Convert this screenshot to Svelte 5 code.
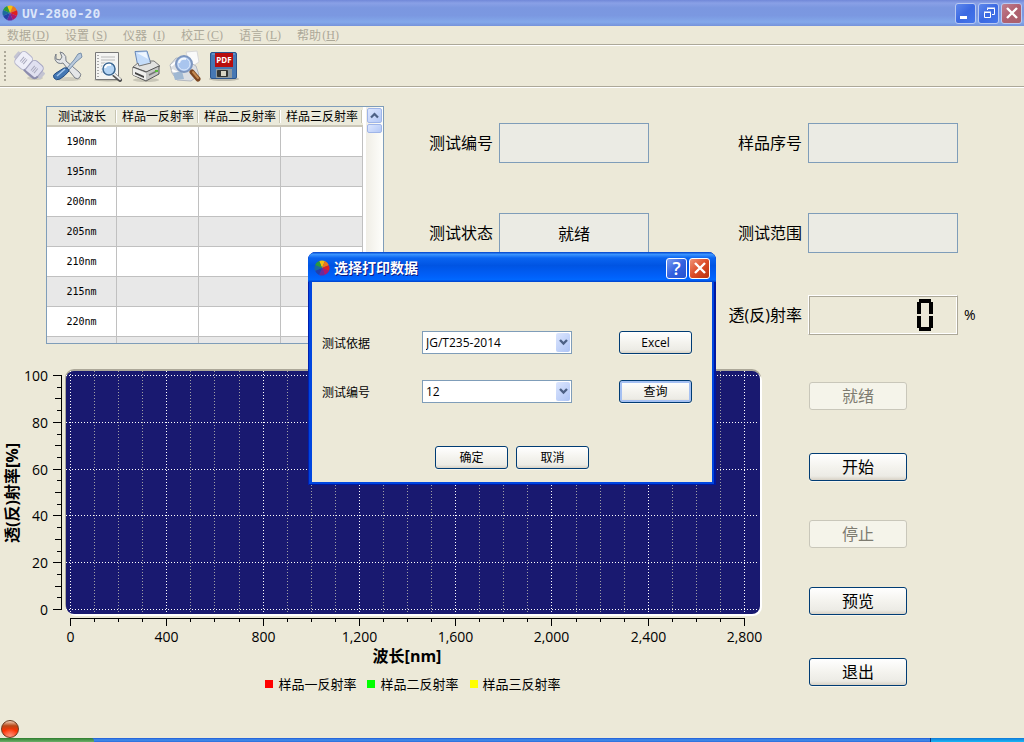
<script lang="ts">
	const menus = [
		{ label: '数据', key: 'D' },
		{ label: '设置', key: 'S' },
		{ label: '仪器', key: 'I' },
		{ label: '校正', key: 'C' },
		{ label: '语言', key: 'L' },
		{ label: '帮助', key: 'H' },
	];
	const samples = [
		{ name: '样品一反射率', color: '#ff0000' },
		{ name: '样品二反射率', color: '#00ff00' },
		{ name: '样品三反射率', color: '#ffff00' },
	];
	const rows = ['190nm', '195nm', '200nm', '205nm', '210nm', '215nm', '220nm', ''];
	const wheel = ['#f4c20d', '#f07818', '#e02020', '#b0186c', '#6a2a9c', '#2440a8', '#1c6a9c', '#2c9a38'];

	// segments of one LCD digit, lit for each number
	const segments = {
		a: [2, 2, 14, 2],
		b: [14, 3, 14, 15],
		c: [14, 17, 14, 29],
		d: [2, 30, 14, 30],
		e: [2, 17, 2, 29],
		f: [2, 3, 2, 15],
		g: [3, 16, 13, 16],
	};
	const lit = ['abcdef', 'bc', 'abged', 'abgcd', 'fgbc', 'afgcd', 'afgedc', 'abc', 'abcdefg', 'abcdfg'];

	let reading = $state(0);
	let standard = $state('JG/T235-2014');
	let testNo = $state('12');
	let chartWidth = $state(762);

	const left = 70;
	const top = 15;
	const bottom = 249;
	const right = $derived(chartWidth - 18);

	const xTicks = $derived(
		Array.from({ length: 29 }, (_, i) => ({
			value: i * 100,
			major: i % 4 === 0,
			x: Math.round(left + ((right - left) * i) / 28) + 0.5,
		}))
	);
	const yTicks = Array.from({ length: 21 }, (_, i) => ({
		value: i * 5,
		major: i % 4 === 0,
		size: i % 4 === 0 ? 9 : i % 2 === 0 ? 7 : 5,
		y: Math.round(bottom - ((bottom - top) * i) / 20) + 0.5,
	}));

	function wedge(i: number) {
		const a = ((i * 45 - 112) * Math.PI) / 180;
		const b = a + Math.PI / 4;
		return `M8 8L${8 + 7.5 * Math.cos(a)} ${8 + 7.5 * Math.sin(a)}A7.5 7.5 0 0 1 ${8 + 7.5 * Math.cos(b)} ${8 + 7.5 * Math.sin(b)}Z`;
	}
</script>

{#snippet logo()}
	<svg class="logo" width="16" height="16" viewBox="0 0 16 16" aria-hidden="true">
		{#each wheel as color, i}
			<path d={wedge(i)} fill={color} />
		{/each}
	</svg>
{/snippet}

{#snippet closeIcon()}
	<svg width="18" height="18" viewBox="0 0 18 18">
		<path d="M4 4l10 10M14 4L4 14" stroke="#fff" stroke-width="2.4" />
	</svg>
{/snippet}

{#snippet combo(id: string)}
	<span class="combo">
		{#if id === 'standard'}
			<select {id} bind:value={standard}><option>JG/T235-2014</option></select>
		{:else}
			<select {id} bind:value={testNo}><option>12</option></select>
		{/if}
		<span class="combo-arrow">
			<svg width="9" height="7" viewBox="0 0 9 7">
				<path d="M1 1l3.5 3.5L8 1" fill="none" stroke="#4d6185" stroke-width="2.4" />
			</svg>
		</span>
	</span>
{/snippet}

<div class="window">
	<header class="titlebar">
		{@render logo()}
		<h1>UV-2800-20</h1>
		<div class="window-buttons">
			<button class="cap" aria-label="最小化">
				<svg width="18" height="18" viewBox="0 0 18 18"><rect x="3" y="12" width="7" height="3" fill="#fff" /></svg>
			</button>
			<button class="cap" aria-label="还原">
				<svg width="18" height="18" viewBox="0 0 18 18" fill="none" stroke="#fff">
					<path d="M7.5 6V4.500H14.500V10.500H12M7 4h8" />
					<path d="M4.500 8.500h6v5h-6zM4 8h7" />
				</svg>
			</button>
			<button class="cap cap-close cap-dim" aria-label="关闭">{@render closeIcon()}</button>
		</div>
	</header>

	<nav class="menubar">
		{#each menus as menu}
			<button>{menu.label}<span class="key">(<u>{menu.key}</u>)</span></button>
		{/each}
	</nav>

	<div class="toolbar">
		<span class="grip"></span>
		<button aria-label="连接">
			<svg width="32" height="32" viewBox="0 0 32 32">
				<ellipse cx="22" cy="28" rx="8" ry="2" fill="#000" opacity=".12" />
				<g transform="translate(16 15) rotate(40)">
					<rect x="-17" y="-4" width="6" height="8" rx="1" fill="#c4c4d2" />
					<rect x="12" y="-4" width="6" height="8" rx="1" fill="#c4c4d2" />
					<rect x="-14" y="-8" width="14" height="16" rx="4" fill="#eeeef8" stroke="#b4b4ca" />
					<rect x="0" y="-8" width="14" height="16" rx="4" fill="#e0e0f0" stroke="#a4a4c0" />
					<path d="M-1 7h13q2-1 2-4" fill="none" stroke="#8c8cac" stroke-width="2" />
					<path d="M-9-3v6M-7-3v6M-5-3v6M5-3v6M7-3v6M9-3v6" stroke="#a8a8bc" />
				</g>
			</svg>
		</button>
		<button aria-label="设置">
			<svg width="32" height="32" viewBox="0 0 32 32">
				<ellipse cx="16" cy="29" rx="13" ry="2" fill="#000" opacity=".12" />
				<path d="M4 4q-3 6 2 9 3 1 5 0l12 15q3 2 5-1t-1-5L14 11q1-5-3-8L8 2l2 5-2 3-4-1z" fill="#e4e6e8" stroke="#777d85" />
				<path d="M29 3l-3 1-4 6-7 8 2 2 7-8 6-5z" fill="#b8c9dc" stroke="#7890ab" />
				<path d="M12 18q4-1 5 3-4 5-9 8-4 2-6-1t2-5z" fill="#4478b4" stroke="#244c80" />
				<path d="M5 26l8-7" stroke="#a4c8ee" stroke-width="1.500" />
			</svg>
		</button>
		<button aria-label="查询">
			<svg width="32" height="32" viewBox="0 0 32 32">
				<ellipse cx="17" cy="30" rx="14" ry="1.500" fill="#000" opacity=".2" />
				<path d="M4.500 2.500h23v27h-23z" fill="#f4f4f2" stroke="#777" />
				<path d="M7 5v23" stroke="#aaa" stroke-width="2" stroke-dasharray="1 2" />
				<path d="M10 7h14M10 10h14M10 13h12M10 16h5M10 19h4M10 22h4" stroke="#b8b8b8" />
				<path d="M22 24l7 6" stroke="#555" stroke-width="4" stroke-linecap="round" />
				<path d="M23 24l6 5" stroke="#eee" stroke-width="2" stroke-linecap="round" />
				<circle cx="18" cy="19" r="7" fill="#b4d4f4" stroke="#fff" />
				<circle cx="18" cy="19" r="6" fill="#b4d4f4" stroke="#3d6790" stroke-width="1.500" />
				<path d="M14 18q1-4 6-3" stroke="#fff" stroke-width="2" fill="none" />
			</svg>
		</button>
		<button aria-label="打印">
			<svg width="32" height="32" viewBox="0 0 32 32">
				<ellipse cx="16" cy="30" rx="13" ry="2" fill="#000" opacity=".15" />
				<path d="M5 1.500L17 1l4 13-13 3z" fill="#c4dcfa" stroke="#6687b8" />
				<path d="M7 3l9-1 2 7z" fill="#eef6ff" />
				<path d="M3 17l5-4 1 3 12-3-1-2h4l6 5-13 6z" fill="#e2e2e0" stroke="#777" />
				<path d="M3 17l13 5 13-6v8l-13 7-13-6z" fill="#c5c6c5" stroke="#555" />
				<path d="M3 18l13 5v7L3 25z" fill="#efefed" />
				<path d="M5 22l9 4v2l-9-4z" fill="#444" />
				<path d="M19 25l8-4" stroke="#777" stroke-width="1.500" />
				<rect x="25" y="20" width="3" height="2" fill="#58bd38" />
			</svg>
		</button>
		<button aria-label="预览">
			<svg width="32" height="32" viewBox="0 0 32 32">
				<path d="M17 2l11-1 2 11-9 6z" fill="#fafafa" stroke="#d8d8d8" />
				<path d="M1 15l6-7 8 1 12 7 3 9-8 6-14-1-5-7z" fill="#dcdfe3" stroke="#b3b8c0" />
				<path d="M2 16l6-5M3 20l6 3" stroke="#fff" stroke-width="2" />
				<path d="M4 23l9-2 2 8-9 1z" fill="#a0b8d2" />
				<path d="M23 22l6 7" stroke="#7b4520" stroke-width="5" stroke-linecap="round" />
				<path d="M24 22l5 6" stroke="#c58a52" stroke-width="2" stroke-linecap="round" />
				<circle cx="15" cy="14" r="8" fill="#a9c5ee" stroke="#7e97c0" stroke-width="2" />
				<circle cx="15" cy="14" r="6" fill="none" stroke="#dae8fb" />
				<path d="M10 13q1-5 7-4" stroke="#fff" stroke-width="2" fill="none" opacity=".8" />
			</svg>
		</button>
		<button aria-label="导出 PDF">
			<svg width="32" height="32" viewBox="0 0 32 32">
				<ellipse cx="16" cy="29" rx="15" ry="2" fill="#000" opacity=".2" />
				<rect x="2.500" y="2.500" width="26" height="26" rx="1.500" fill="#4678b4" stroke="#2b558c" />
				<path d="M4 4h23" stroke="#7ca8da" />
				<rect x="7" y="3" width="18" height="14" fill="#b80d0d" />
				<text x="16" y="13" text-anchor="middle" font-size="8" font-weight="700" fill="#fff">PDF</text>
				<rect x="8" y="19" width="16" height="9" fill="#8f9aa0" />
				<rect x="9" y="20" width="11" height="7" rx="1" fill="#343633" />
				<rect x="13" y="21" width="5" height="5" fill="#d8d5c4" />
			</svg>
		</button>
	</div>

	<main>
		<section class="overview">
			<div class="grid-view">
				<table>
					<thead>
						<tr>
							<th class="wave">测试波长</th>
							{#each samples as sample}
								<th>{sample.name}</th>
							{/each}
						</tr>
					</thead>
					<tbody>
						{#each rows as row}
							<tr>
								<td>{row}</td>
								<td></td>
								<td></td>
								<td></td>
							</tr>
						{/each}
					</tbody>
				</table>
				<div class="scrollbar">
					<button aria-label="向上滚动">
						<svg width="9" height="7" viewBox="0 0 9 7">
							<path d="M1 5.500L4.500 2 8 5.500" fill="none" stroke="#4d6185" stroke-width="2.200" />
						</svg>
					</button>
					<span class="thumb"></span>
				</div>
			</div>

			<div class="fields">
				<label class="first" for="test-id">测试编号</label>
				<input id="test-id" readonly />
				<label class="second" for="sample-id">样品序号</label>
				<input id="sample-id" readonly />

				<label class="first" for="status">测试状态</label>
				<input id="status" readonly value="就绪" />
				<label class="second" for="range">测试范围</label>
				<input id="range" readonly />

				<label class="second" for="reading">透(反)射率</label>
				<output id="reading" class="lcd" aria-label={String(reading)}>
					<svg width="16" height="32" viewBox="0 0 16 32" aria-hidden="true">
						{#each lit[reading] as name}
							{@const [x1, y1, x2, y2] = segments[name]}
							<line {x1} {y1} {x2} {y2} stroke="#000" stroke-width="4" />
						{/each}
					</svg>
				</output>
				<span class="unit">%</span>
			</div>
		</section>

		<section class="work">
			<div class="chart" bind:clientWidth={chartWidth}>
				<svg width={chartWidth} height="306">
					<rect x="65" y="9" width={chartWidth - 66} height="244" rx="9" fill="#aca899" />
					<rect x="67" y="12" width={chartWidth - 67} height="244" rx="9" fill="#fff" />
					<rect x="66" y="11" width={chartWidth - 68} height="243" rx="8" fill="#191970" />

					{#each xTicks as tick}
						<line
							x1={tick.x}
							y1="11"
							x2={tick.x}
							y2="253"
							stroke={tick.major ? '#fff' : '#a0a0a4'}
							stroke-dasharray="1 2"
						/>
						<line x1={tick.x} y1="258" x2={tick.x} y2={tick.major ? 266 : 262} stroke="#000" />
						{#if tick.major}
							<text x={tick.x} y="282" text-anchor="middle">{tick.value.toLocaleString('en-US')}</text>
						{/if}
					{/each}
					<line x1={left} y1="258.5" x2={right + 1} y2="258.5" stroke="#000" />

					{#each yTicks as tick}
						{#if tick.major}
							<line x1="66" y1={tick.y} x2={chartWidth - 4} y2={tick.y} stroke="#fff" stroke-dasharray="1 2" />
							<text x="48" y={tick.y + 5} text-anchor="end">{tick.value}</text>
						{/if}
						<line x1={62 - tick.size} y1={tick.y} x2="62" y2={tick.y} stroke="#000" />
					{/each}
					<line x1="61.5" y1={top} x2="61.5" y2={bottom + 1} stroke="#000" />

					<text class="axis-title" x={(left + right) / 2} y="302" text-anchor="middle">波长[nm]</text>
					<text class="axis-title" transform="translate(18 133) rotate(-90)" text-anchor="middle">透(反)射率[%]</text>
				</svg>
				<ul class="legend">
					{#each samples as sample}
						<li><span class="swatch" style:background={sample.color}></span>{sample.name}</li>
					{/each}
				</ul>
			</div>

			<div class="actions">
				<button class="xp large" disabled>就绪</button>
				<div class="run">
					<button class="xp large">开始</button>
					<button class="xp large" disabled>停止</button>
					<button class="xp large">预览</button>
				</div>
				<button class="xp large">退出</button>
			</div>
		</section>
	</main>

	<footer><span class="led"></span></footer>
	<div class="taskbar"><span class="start"></span><span class="tray"></span></div>

	<div class="dialog" role="dialog" aria-labelledby="dialog-title">
		<div class="dialog-title">
			{@render logo()}
			<h2 id="dialog-title">选择打印数据</h2>
			<div class="window-buttons">
				<button class="cap help" aria-label="帮助">?</button>
				<button class="cap cap-close" aria-label="关闭">{@render closeIcon()}</button>
			</div>
		</div>
		<form class="dialog-body" onsubmit={(e) => e.preventDefault()}>
			<div class="dialog-fields">
				<label for="standard">测试依据</label>
				{@render combo('standard')}
				<button type="button" class="xp">Excel</button>
				<label for="test-no">测试编号</label>
				{@render combo('test-no')}
				<button type="button" class="xp default">查询</button>
			</div>
			<div class="dialog-actions">
				<button class="xp">确定</button>
				<button type="button" class="xp">取消</button>
			</div>
		</form>
	</div>
</div>

<style>
	:global(body) {
		background: #ece9d8;
	}

	.window,
	.window * {
		box-sizing: border-box;
	}

	.window {
		position: relative;
		display: flex;
		flex-direction: column;
		min-height: 100vh;
		background: #ece9d8;
		color: #000;
		font: 12px 'Open Sans', 'Noto Sans CJK SC', sans-serif;
	}

	button,
	input,
	select {
		font: inherit;
		color: inherit;
		margin: 0;
		padding: 0;
	}

	h1,
	h2 {
		margin: 0;
		flex: 1;
	}

	svg {
		display: block;
		flex-shrink: 0;
	}

	.titlebar {
		display: flex;
		align-items: center;
		gap: 4px;
		height: 26px;
		padding: 0 2px;
		background: linear-gradient(#7188d8, #89a0e6 12%, #7b97e0 30%, #7b98e1 60%, #83a8ea 85%, #7592da);
	}

	.titlebar h1 {
		color: #dce6fa;
		font: bold 13px 'DejaVu Sans Mono', monospace;
	}

	.window-buttons {
		display: flex;
		gap: 2px;
	}

	.cap {
		display: flex;
		align-items: center;
		justify-content: center;
		width: 21px;
		height: 21px;
		border: 1px solid #fff;
		border-radius: 3px;
		background: linear-gradient(135deg, #7b9cf0, #3462e0 50%, #2452d0);
		color: #fff;
	}

	.titlebar .cap {
		border-color: #b9c9f2;
		background: linear-gradient(135deg, #5f88ec, #3b69e2 50%, #4475ea);
	}

	.cap-close {
		background: linear-gradient(135deg, #f09478, #dc4c28 50%, #b8320e);
	}

	.titlebar .cap-dim {
		background: linear-gradient(135deg, #c08090, #b06070 50%, #a8606c);
	}

	.help {
		font: 600 18px 'Open Sans', sans-serif;
	}

	.menubar {
		display: flex;
		gap: 16px;
		height: 19px;
		padding: 0 7px;
		border-bottom: 1px solid #aca899;
	}

	.menubar button {
		display: flex;
		align-items: center;
		justify-content: space-between;
		width: 42px;
		border: 0;
		background: none;
		color: #aca899;
		white-space: nowrap;
	}

	.key {
		font: 12px 'Liberation Serif', serif;
	}

	.toolbar {
		display: flex;
		align-items: center;
		gap: 7px;
		height: 42px;
		padding: 0 4px;
		border-top: 1px solid #fff;
		border-bottom: 1px solid #aca899;
	}

	.toolbar button {
		width: 32px;
		height: 32px;
		border: 0;
		background: none;
	}

	.toolbar .grip {
		width: 2px;
		height: 30px;
		background: repeating-linear-gradient(#aca899 0 2px, transparent 2px 4px);
	}

	main {
		flex: 1;
		border-top: 1px solid #fff;
	}

	.overview {
		display: flex;
		align-items: flex-start;
		padding: 18px 47px 16px 46px;
	}

	.grid-view {
		display: flex;
		flex-shrink: 0;
		justify-content: space-between;
		height: 238px;
		width: 338px;
		overflow: hidden;
		border: 1px solid #7f9db9;
		background: #fff;
	}

	table {
		table-layout: fixed;
		width: 316px;
		height: 0;
		border-spacing: 0;
	}

	th {
		height: 20px;
		padding: 0;
		border-bottom: 2px solid #cbc7b8;
		background: linear-gradient(90deg, transparent 80px, #c7c5b2 80px 81px, #fff 81px) 0 3px / 100% 13px no-repeat #ebeadb;
		font-weight: 400;
		white-space: nowrap;
	}

	th.wave {
		width: 70px;
		background: linear-gradient(90deg, transparent 68px, #c7c5b2 68px 69px, #fff 69px) 0 3px / 100% 13px no-repeat #ebeadb;
	}

	td {
		height: 30px;
		padding: 0;
		border-right: 1px solid #c0c0c0;
		border-bottom: 1px solid #c0c0c0;
		font: 10px 'DejaVu Sans Mono', monospace;
		text-align: center;
	}

	tbody tr:nth-child(even) {
		background: #e8e8e8;
	}

	.scrollbar {
		width: 17px;
		padding: 1px;
		background: linear-gradient(90deg, #f0eee6, #fefefb);
	}

	.scrollbar button,
	.thumb {
		display: flex;
		align-items: center;
		justify-content: center;
		width: 15px;
		height: 15px;
		border: 1px solid #9fb5e8;
		border-radius: 2px;
		background: linear-gradient(135deg, #dce6fe, #b4c8f6);
	}

	.thumb {
		height: 9px;
		margin-top: 1px;
	}

	.fields {
		flex: 1;
		display: grid;
		grid-template-columns: auto 150px 1fr 150px 13px;
		grid-template-rows: 90px 82px 40px;
		column-gap: 6px;
		margin: 17px 0 0 45px;
		font-size: 16px;
	}

	.fields label,
	.unit {
		height: 40px;
		line-height: 40px;
		white-space: nowrap;
	}

	.fields .first {
		grid-column: 1;
	}

	.fields .second {
		grid-column: 3;
		justify-self: end;
	}

	.fields input {
		width: 150px;
		height: 40px;
		border: 1px solid #7f9db9;
		border-radius: 0;
		background: #ebebe4;
		text-align: center;
	}

	.unit {
		font-size: 14px;
	}

	.lcd {
		display: flex;
		align-items: center;
		justify-content: flex-end;
		height: 40px;
		padding-right: 24px;
		border: 1px solid #aca899;
		border-top-color: #fff;
		border-left-color: #fff;
		box-shadow: inset 1px 1px #aca899, inset -1px -1px #fff;
	}

	.work {
		display: flex;
	}

	.chart {
		flex: 1;
		min-width: 0;
		font-size: 14px;
	}

	.axis-title {
		font-size: 16px;
		font-weight: 700;
	}

	.legend {
		display: flex;
		justify-content: center;
		gap: 11px;
		margin: 8px 0 0;
		padding: 0 0 0 64px;
		list-style: none;
		font-size: 13px;
		line-height: 20px;
	}

	.legend li {
		display: flex;
		align-items: center;
		gap: 5px;
	}

	.swatch {
		width: 8px;
		height: 8px;
	}

	.actions,
	.run {
		display: flex;
		flex-direction: column;
		gap: 39px;
	}

	.actions {
		gap: 43px;
		padding: 22px 117px 0 47px;
	}

	.xp {
		width: 73px;
		height: 23px;
		border: 1px solid #003c74;
		border-radius: 3px;
		background: linear-gradient(#fff, #f4f3ee 50%, #ecebe5 85%, #d8d2c6);
		box-shadow: 0 1px #f8f6ee;
		line-height: 19px;
	}

	.xp.large {
		width: 98px;
		height: 28px;
		font-size: 16px;
		line-height: 24px;
	}

	.xp.default {
		box-shadow: inset 0 0 0 2px #a5c0f2, 0 1px #f8f6ee;
	}

	.xp:disabled {
		border-color: #c9c7ba;
		background: #f5f4ea;
		box-shadow: none;
		color: #7d7b70;
	}

	footer {
		padding: 0 1px;
	}

	.led {
		display: block;
		width: 18px;
		height: 18px;
		border: 1px solid #6b3a20;
		border-radius: 50%;
		background: radial-gradient(circle at 50% 95%, #ff9078, transparent 45%), linear-gradient(#f0d0b8, #b84818 30%, #ff3000 60%, #ff5030);
	}

	.taskbar {
		display: flex;
		justify-content: space-between;
		height: 4px;
		background: linear-gradient(#1f5ad6, #428eea 50%, #2a6cdc);
	}

	.start,
	.tray {
		width: 94px;
		background: linear-gradient(#2e7d2e, #6cb06a);
		border-top-right-radius: 3px;
	}

	.tray {
		border-left: 1px solid #0a3a80;
		border-radius: 0;
		background: linear-gradient(#1078d8, #18b8f4);
	}

	/* centred over the main window */
	.dialog {
		position: absolute;
		top: 252px;
		left: calc(50% - 204px);
		width: 408px;
		padding: 0 4px 3px;
		border-radius: 8px 8px 0 0;
		background: #0046e0;
		box-shadow: inset 1px 0 #0020b0, inset -2px -1px #0018a0;
	}

	.dialog-title {
		display: flex;
		align-items: center;
		gap: 4px;
		height: 30px;
		margin: 0 -4px;
		padding: 2px 6px 0;
		border-radius: 8px 8px 0 0;
		background: linear-gradient(#0040c8, #3a94ff 8%, #0a64f0 20%, #0054e3 45%, #0060fa 80%, #0068ff 92%, #0040c8);
		color: #fff;
	}

	.dialog-title h2 {
		font-size: 14px;
		line-height: 18px;
		font-weight: 700;
		text-shadow: 1px 1px #0a1883;
	}

	.dialog-body {
		padding: 49px 10px 13px;
		background: #ece9d8;
	}

	.dialog-fields {
		display: grid;
		grid-template-columns: 100px 150px 73px;
		grid-auto-rows: 23px;
		row-gap: 26px;
		align-items: center;
	}

	.dialog-fields .xp {
		margin-left: 47px;
	}

	.combo {
		position: relative;
	}

	.combo select {
		appearance: none;
		display: block;
		width: 150px;
		height: 23px;
		padding: 0 20px 0 3px;
		border: 1px solid #7f9db9;
		border-radius: 0;
		background: #fff;
	}

	/* drop-down glyph sits on the select */
	.combo-arrow {
		position: absolute;
		top: 2px;
		right: 2px;
		bottom: 2px;
		display: flex;
		align-items: center;
		justify-content: center;
		width: 14px;
		border-radius: 2px;
		background: linear-gradient(135deg, #dce6fe, #aec4f5);
		pointer-events: none;
	}

	.dialog-actions {
		display: flex;
		justify-content: center;
		gap: 8px;
		margin-top: 43px;
	}
</style>
